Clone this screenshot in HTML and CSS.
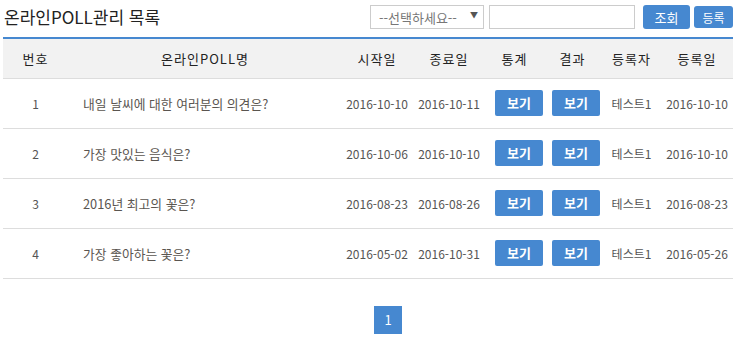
FILE: index.html
```html
<!DOCTYPE html>
<html lang="ko">
<head>
<meta charset="utf-8">
<title>온라인POLL관리 목록</title>
<link rel="stylesheet" href="styles.css">
</head>
<body>
<div class="page">
  <div class="toolbar">
    <h1 class="title">온라인POLL관리 목록</h1>
    <div class="search">
      <div class="select"><span>--선택하세요--</span><span class="arrow">▼</span></div>
      <input class="input" type="text">
      <button class="btn btn-search">조회</button>
      <button class="btn btn-reg">등록</button>
    </div>
  </div>
  <table class="list">
    <colgroup>
      <col class="c1"><col class="c2"><col class="c3"><col class="c4"><col class="c5"><col class="c6"><col class="c7"><col class="c8">
    </colgroup>
    <thead>
      <tr><th>번호</th><th>온라인POLL명</th><th>시작일</th><th>종료일</th><th>통계</th><th>결과</th><th>등록자</th><th>등록일</th></tr>
    </thead>
    <tbody>
      <tr><td>1</td><td class="subj">내일 날씨에 대한 여러분의 의견은?</td><td>2016-10-10</td><td>2016-10-11</td><td class="bc"><span class="view">보기</span></td><td class="bc"><span class="view">보기</span></td><td>테스트1</td><td>2016-10-10</td></tr>
      <tr><td>2</td><td class="subj">가장 맛있는 음식은?</td><td>2016-10-06</td><td>2016-10-10</td><td class="bc"><span class="view">보기</span></td><td class="bc"><span class="view">보기</span></td><td>테스트1</td><td>2016-10-10</td></tr>
      <tr><td>3</td><td class="subj">2016년 최고의 꽃은?</td><td>2016-08-23</td><td>2016-08-26</td><td class="bc"><span class="view">보기</span></td><td class="bc"><span class="view">보기</span></td><td>테스트1</td><td>2016-08-23</td></tr>
      <tr><td>4</td><td class="subj">가장 좋아하는 꽃은?</td><td>2016-05-02</td><td>2016-10-31</td><td class="bc"><span class="view">보기</span></td><td class="bc"><span class="view">보기</span></td><td>테스트1</td><td>2016-05-26</td></tr>
    </tbody>
  </table>
  <div class="paging"><span class="page-num">1</span></div>
</div>
</body>
</html>
```

FILE: styles.css
```css
* { box-sizing: border-box; }
body {
  margin: 0;
  font-family: "Noto Sans CJK KR", "Noto Sans", sans-serif;
  color: #555;
  background: #fff;
}
.page {
  width: 733px;
  padding: 5px 0 0 3px;
}
.toolbar {
  display: flex;
  justify-content: space-between;
  align-items: center;
  height: 24px;
  margin-bottom: 8px;
}
.title {
  margin: 0;
  font-size: 17px;
  font-weight: normal;
  color: #222;
  line-height: 24px;
  padding-left: 1px;
}
.search {
  display: flex;
  align-items: center;
}
.select {
  width: 114px;
  height: 24px;
  border: 1px solid #ccc;
  display: flex;
  align-items: center;
  justify-content: space-between;
  padding: 0 5px 0 8px;
  font-size: 13px;
  color: #777;
}
.arrow {
  font-size: 8px;
  color: #555;
  margin-top: -6px;
}
.input {
  width: 146px;
  height: 24px;
  border: 1px solid #ccc;
  margin: 0 0 0 5px;
  padding: 0;
}
.btn {
  border: 0;
  background: #4688d0;
  color: #fff;
  font-family: inherit;
  border-radius: 3px;
  padding: 0;
}
.btn-search {
  width: 47px;
  height: 24px;
  font-size: 13px;
  margin-left: 8px;
}
.btn-reg {
  width: 39px;
  height: 22px;
  font-size: 12px;
  margin-left: 4px;
}
.list {
  width: 730px;
  table-layout: fixed;
  border-collapse: collapse;
  border-top: 2px solid #4688d0;
}
.c1 { width: 65px; }
.c2 { width: 274px; }
.c3 { width: 70px; }
.c4 { width: 74px; }
.c5 { width: 57px; }
.c6 { width: 59px; }
.c7 { width: 59px; }
.c8 { width: 72px; }
.list th {
  background: #f2f2f2;
  height: 40px;
  font-size: 13px;
  font-weight: normal;
  color: #222;
  padding: 0;
  border-bottom: 1px solid #ddd;
  letter-spacing: 1px;
}
.list td {
  height: 50px;
  font-size: 12px;
  color: #555;
  text-align: center;
  padding: 0;
  border-bottom: 1px solid #ddd;
  white-space: nowrap;
}
.list td.subj {
  text-align: left;
  padding-left: 15px;
  font-size: 12.8px;
  color: #5a5550;
}
.list td.bc {
  text-align: left;
  padding-left: 9px;
}
.view {
  display: inline-block;
  width: 48px;
  height: 26px;
  line-height: 26px;
  background: #4688d0;
  color: #fff;
  font-weight: bold;
  font-size: 13px;
  text-align: center;
  border-radius: 2px;
  vertical-align: middle;
}
.paging {
  display: flex;
  justify-content: center;
  padding-top: 27px;
  padding-left: 40px;
}
.page-num {
  width: 28px;
  height: 28px;
  line-height: 28px;
  background: #4688d0;
  color: #fff;
  font-size: 13px;
  text-align: center;
}
```
